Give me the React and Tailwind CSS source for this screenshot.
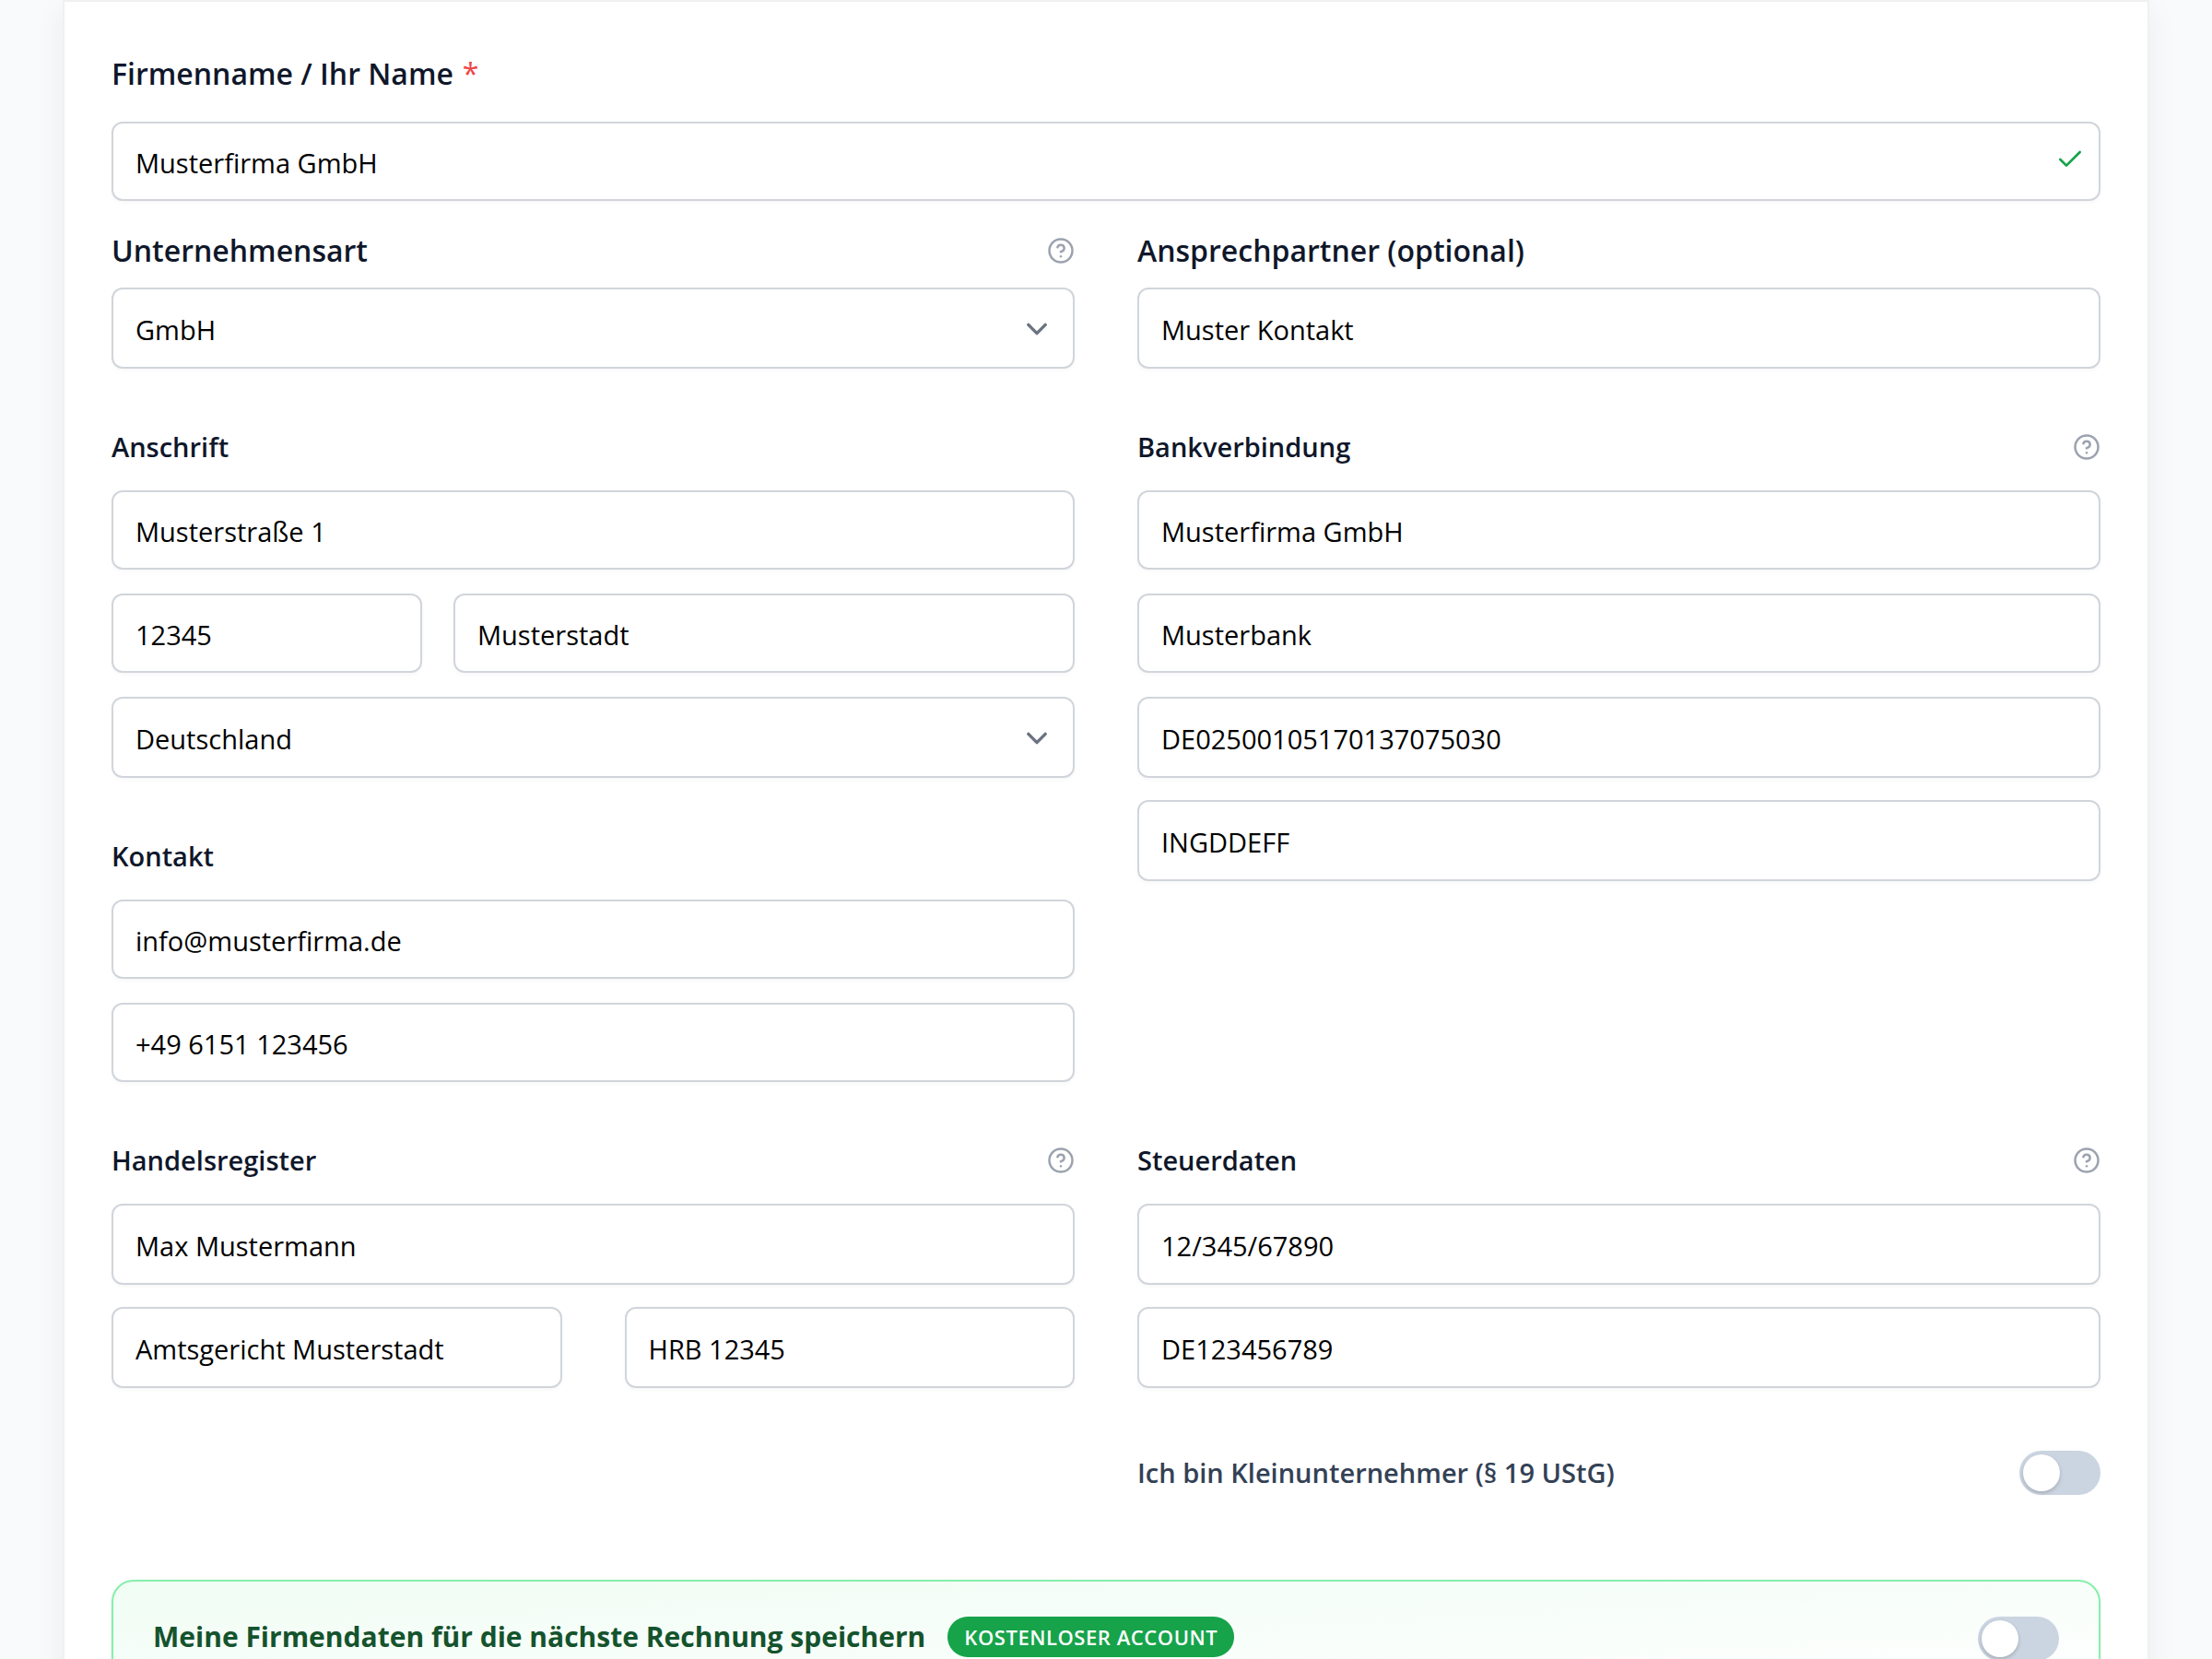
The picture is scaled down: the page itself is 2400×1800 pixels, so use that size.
import React, { useState } from 'react';
import { Check, CircleQuestionMark } from 'lucide-react';

const inputClass =
  'block w-full rounded-xl border-2 border-[#d1d5db] bg-white px-6 text-[29px] text-black shadow-[0_2px_4px_rgba(0,0,0,0.03)] outline-none focus:border-green-500';

const HelpButton = ({ label }) => (
  <button type="button" aria-label={label} className="cursor-pointer text-[#9ca3af] hover:text-gray-600">
    <CircleQuestionMark size={30} strokeWidth={2} className="block" />
  </button>
);

const TextField = ({ id, label, value, onChange, type = 'text', valid = false, tall = false }) => (
  <div className="relative">
    <input
      id={id}
      name={id}
      type={type}
      aria-label={label}
      value={value}
      onChange={onChange}
      className={`${inputClass} pt-0.5 ${tall ? 'h-[88px]' : 'h-[86px]'}`}
    />
    {valid && (
      <Check size={32} strokeWidth={2} className="pointer-events-none absolute right-[17px] top-[25px] text-[#16a34a]" />
    )}
  </div>
);

const SelectField = ({ id, label, value, onChange, options }) => (
  <div className="relative">
    <select
      id={id}
      name={id}
      aria-label={label}
      value={value}
      onChange={onChange}
      className={`${inputClass} h-[88px] appearance-none pt-1`}
    >
      {options.map((option) => (
        <option key={option} value={option}>{option}</option>
      ))}
    </select>
    <svg
      className="pointer-events-none absolute right-[18px] top-[22px] size-[46px] text-[#6b7280]"
      viewBox="0 0 20 20"
      fill="none"
      stroke="currentColor"
      strokeWidth="1.5"
      strokeLinecap="round"
      strokeLinejoin="round"
    >
      <path d="M6 8l4 4 4-4" />
    </svg>
  </div>
);

const FieldLabel = ({ htmlFor, children, required = false, help }) => (
  <div className="flex items-center justify-between">
    <label htmlFor={htmlFor} className="text-[32px] font-semibold leading-[48px] text-[#0f172a]">
      {children}
      {required && <span className="ml-2.5 font-normal text-[#ef4444]">*</span>}
    </label>
    {help && <HelpButton label={help} />}
  </div>
);

const SectionTitle = ({ children, help }) => (
  <div className="mb-6 flex h-[46px] items-center justify-between">
    <h3 className="text-[29px] font-semibold leading-[46px] text-[#0f172a]">{children}</h3>
    {help && <HelpButton label={help} />}
  </div>
);

const Toggle = ({ id, label, checked, onChange }) => (
  <label htmlFor={id} className="relative inline-flex shrink-0 cursor-pointer">
    <input
      id={id}
      type="checkbox"
      role="switch"
      aria-label={label}
      checked={checked}
      onChange={onChange}
      className="peer h-12 w-[88px] cursor-pointer appearance-none rounded-full bg-[#cbd5e1] transition-colors checked:bg-[#16a34a]"
    />
    <span className="pointer-events-none absolute left-1 top-1 size-10 rounded-full bg-white shadow-[0_2px_4px_rgba(0,0,0,0.2)] transition-transform peer-checked:translate-x-10" />
  </label>
);

const App = () => {
  const [form, setForm] = useState({
    firmenname: 'Musterfirma GmbH',
    unternehmensart: 'GmbH',
    ansprechpartner: 'Muster Kontakt',
    strasse: 'Musterstraße 1',
    plz: '12345',
    ort: 'Musterstadt',
    land: 'Deutschland',
    email: 'info@musterfirma.de',
    telefon: '+49 6151 123456',
    kontoinhaber: 'Musterfirma GmbH',
    bank: 'Musterbank',
    iban: 'DE02500105170137075030',
    bic: 'INGDDEFF',
    geschaeftsfuehrer: 'Max Mustermann',
    registergericht: 'Amtsgericht Musterstadt',
    registernummer: 'HRB 12345',
    steuernummer: '12/345/67890',
    ustId: 'DE123456789',
  });
  const [kleinunternehmer, setKleinunternehmer] = useState(false);
  const [saveData, setSaveData] = useState(false);

  const handleChange = (e) => {
    const { name, value } = e.target;
    setForm((prev) => ({ ...prev, [name]: value }));
  };

  const field = (id, label) => ({ id, label, value: form[id], onChange: handleChange });

  return (
    <div className="h-screen overflow-hidden bg-[#f8fafc] px-[68px] font-['Segoe_UI','Open_Sans','Noto_Sans',sans-serif]">
      <form
        onSubmit={(e) => e.preventDefault()}
        className="border-2 border-[#f0f0f0] bg-white px-[51px] pb-12 pt-[54px] shadow-[0_8px_32px_rgba(0,0,0,0.06)]"
      >
        <FieldLabel htmlFor="firmenname" required>Firmenname / Ihr Name</FieldLabel>
        <div className="mt-7">
          <TextField {...field('firmenname')} valid />
        </div>

        <div className="mt-[30px] grid grid-cols-2 gap-x-[68px]">
          <div>
            <FieldLabel htmlFor="unternehmensart" help="Hilfe zur Unternehmensart">Unternehmensart</FieldLabel>
            <div className="mt-4">
              <SelectField {...field('unternehmensart')} options={['GmbH', 'UG', 'AG', 'Einzelunternehmen']} />
            </div>
          </div>
          <div>
            <FieldLabel htmlFor="ansprechpartner">Ansprechpartner (optional)</FieldLabel>
            <div className="mt-4">
              <TextField {...field('ansprechpartner')} tall />
            </div>
          </div>
        </div>

        <div className="mt-[62px] grid grid-cols-2 gap-x-[68px]">
          <div>
            <section>
              <SectionTitle>Anschrift</SectionTitle>
              <div className="flex flex-col gap-[26px]">
                <TextField {...field('strasse', 'Straße und Hausnummer')} />
                <div className="grid grid-cols-[1fr_2fr] gap-[34px]">
                  <TextField {...field('plz', 'PLZ')} />
                  <TextField {...field('ort', 'Ort')} />
                </div>
                <SelectField {...field('land', 'Land')} options={['Deutschland', 'Österreich', 'Schweiz']} />
              </div>
            </section>
            <section className="mt-[62px]">
              <SectionTitle>Kontakt</SectionTitle>
              <div className="flex flex-col gap-[26px]">
                <TextField {...field('email', 'E-Mail')} type="email" />
                <TextField {...field('telefon', 'Telefon')} type="tel" />
              </div>
            </section>
          </div>

          <section>
            <SectionTitle help="Hilfe zur Bankverbindung">Bankverbindung</SectionTitle>
            <div className="flex flex-col gap-[26px]">
              <TextField {...field('kontoinhaber', 'Kontoinhaber')} />
              <TextField {...field('bank', 'Bank')} />
              <div className="flex flex-col gap-6">
                <TextField {...field('iban', 'IBAN')} tall />
                <TextField {...field('bic', 'BIC')} tall />
              </div>
            </div>
          </section>
        </div>

        <div className="mt-[62px] grid grid-cols-2 gap-x-[68px]">
          <section>
            <SectionTitle help="Hilfe zum Handelsregister">Handelsregister</SectionTitle>
            <div className="flex flex-col gap-6">
              <TextField {...field('geschaeftsfuehrer', 'Geschäftsführer')} tall />
              <div className="grid grid-cols-2 gap-[68px]">
                <TextField {...field('registergericht', 'Registergericht')} tall />
                <TextField {...field('registernummer', 'Registernummer')} tall />
              </div>
            </div>
          </section>

          <section>
            <SectionTitle help="Hilfe zu den Steuerdaten">Steuerdaten</SectionTitle>
            <div className="flex flex-col gap-6">
              <TextField {...field('steuernummer', 'Steuernummer')} tall />
              <TextField {...field('ustId', 'USt-IdNr.')} tall />
            </div>
            <div className="mt-[68px] flex items-center justify-between">
              <label htmlFor="kleinunternehmer" className="text-[29px] font-semibold leading-[48px] text-[#334155]">
                Ich bin Kleinunternehmer (§ 19 UStG)
              </label>
              <Toggle
                id="kleinunternehmer"
                label="Ich bin Kleinunternehmer (§ 19 UStG)"
                checked={kleinunternehmer}
                onChange={() => setKleinunternehmer(!kleinunternehmer)}
              />
            </div>
          </section>
        </div>

        <div className="mt-[92px] rounded-3xl border-2 border-[#86efac] bg-linear-to-br from-[#f0fdf4] to-white px-[43px] py-[38px] shadow-sm">
          <div className="flex items-start justify-between">
            <div className="flex items-center gap-6">
              <label htmlFor="saveData" className="text-[30px] font-bold leading-[44px] text-[#14532d]">
                Meine Firmendaten für die nächste Rechnung speichern
              </label>
              <span className="rounded-full bg-[#16a34a] px-[18px] text-[22px] font-semibold uppercase leading-[44px] tracking-wide text-white">
                Kostenloser Account
              </span>
            </div>
            <Toggle
              id="saveData"
              label="Meine Firmendaten speichern"
              checked={saveData}
              onChange={() => setSaveData(!saveData)}
            />
          </div>
        </div>
      </form>
    </div>
  );
};

export default App;
